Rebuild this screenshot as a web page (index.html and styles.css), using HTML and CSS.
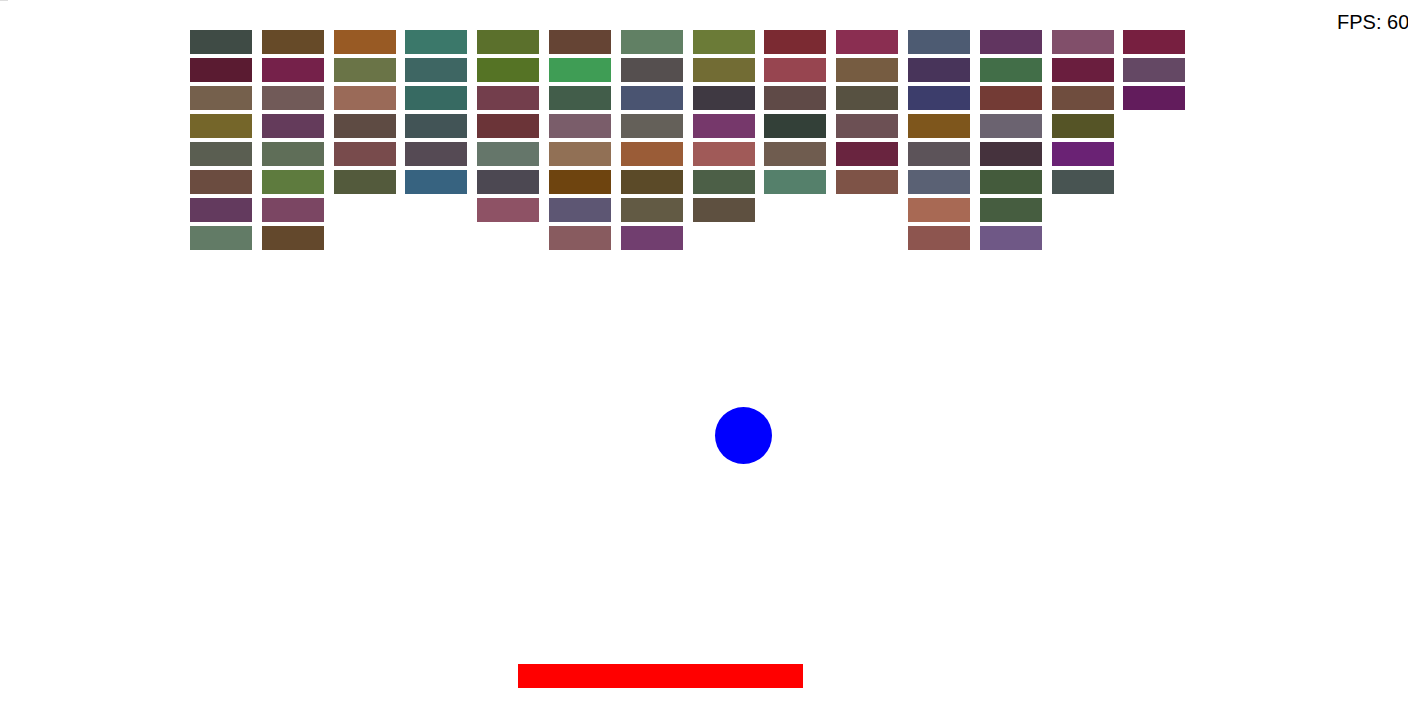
FILE: index.html
```html
<!DOCTYPE html>
<html lang="en">
<head>
  <meta charset="UTF-8" />
  <meta name="viewport" content="width=device-width, initial-scale=1.0"/>
  <title>Breakout</title>
  <link rel="stylesheet" href="styles.css">
</head>
<body>
  <div id="board">
    <div id="corner"></div>
    <div id="bricks"></div>
    <div id="fps">FPS: 60</div>
    <div id="ball"></div>
    <div id="paddle"></div>
  </div>

  <script>
    const bricks = document.getElementById('bricks');

    // cada coluna, de cima para baixo
    const columns = [
      ['#3f4b45', '#5a1b31', '#75604c', '#75662a', '#5a5e51', '#6b4c40', '#633a5e', '#627b66'],
      ['#664a28', '#75214a', '#715a58', '#643b5b', '#5f6e58', '#5e7b3e', '#7b4663', '#63482c'],
      ['#985a24', '#6a7447', '#9a6a58', '#5e4b43', '#784b4c', '#535a3c'],
      ['#3b786a', '#3e6663', '#376a62', '#425456', '#554a54', '#376380'],
      ['#5b702c', '#557325', '#733e4c', '#6b3438', '#65766a', '#4c4852', '#8e5265'],
      ['#654434', '#3f9d55', '#425d4a', '#7a5d6a', '#917055', '#6e440f', '#5d5673', '#885b5f'],
      ['#618064', '#554f4f', '#4a5471', '#646059', '#9a5c37', '#5b4a28', '#625a44', '#713e6f'],
      ['#6b7b37', '#726c34', '#3f3942', '#76386b', '#a05a58', '#4c5f47', '#5e5040'],
      ['#7b2a32', '#974550', '#5f4a47', '#334038', '#6f5c4f', '#55806b'],
      ['#8a2e51', '#765c41', '#575141', '#6c5054', '#69243f', '#7e5347'],
      ['#4d5b72', '#48345a', '#3c3d6b', '#7e561c', '#5c5359', '#5a6174', '#a86954', '#8d554f'],
      ['#613560', '#426e48', '#733b35', '#6b6370', '#45323d', '#445b3c', '#465d40', '#6f5886'],
      ['#814f6a', '#6a1e3e', '#6f4d3e', '#555426', '#6a2274', '#485452'],
      ['#771f40', '#644864', '#621c5c']
    ];

    columns.forEach(col => {
      const c = document.createElement('div');
      c.className = 'column';
      col.forEach(color => {
        const b = document.createElement('div');
        b.className = 'brick';
        b.style.background = color;
        c.appendChild(b);
      });
      bricks.appendChild(c);
    });
  </script>
</body>
</html>
```
FILE: styles.css
```css
* { box-sizing: border-box; margin: 0; padding: 0; }
body {
  background: #fff;
  font-family: 'Liberation Sans', Arial, sans-serif;
  overflow: hidden;
}

#board {
  width: 1408px;
  height: 727px;
  position: relative;
}

#corner {
  position: absolute;
  top: 0;
  left: 0;
  width: 8px;
  height: 1px;
  background: #ddd;
}

#bricks {
  display: flex;
  align-items: flex-start;
  gap: 9.8px;
  padding: 30px 0 0 190px;
}

.column {
  display: flex;
  flex-direction: column;
  gap: 4px;
}

.brick {
  width: 62px;
  height: 24px;
}

#fps {
  position: absolute;
  top: 12px;
  left: 1337px;
  font-size: 20px;
  line-height: 20px;
  color: #000;
  white-space: nowrap;
}

#ball {
  position: absolute;
  left: 715px;
  top: 407px;
  width: 57px;
  height: 57px;
  border-radius: 50%;
  background: #00f;
}

#paddle {
  position: absolute;
  left: 518px;
  top: 664px;
  width: 285px;
  height: 24px;
  background: #f00;
}
```
